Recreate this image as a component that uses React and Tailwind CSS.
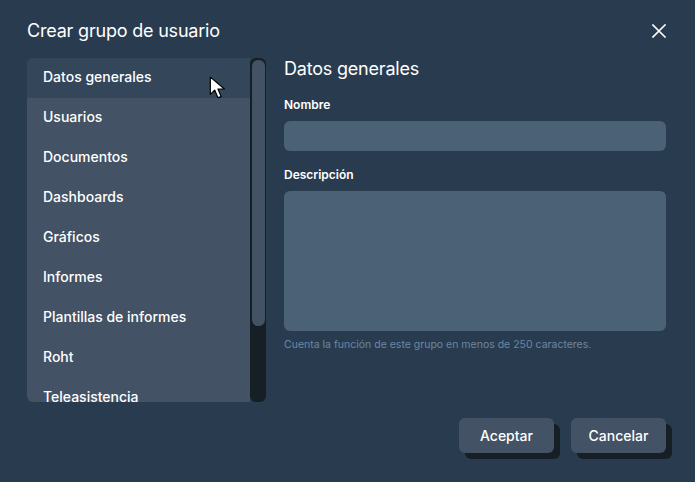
import React from "react";

const items = [
  "Datos generales",
  "Usuarios",
  "Documentos",
  "Dashboards",
  "Gráficos",
  "Informes",
  "Plantillas de informes",
  "Roht",
  "Teleasistencia",
];

const App = () => {
  return (
    <div
      className="w-[695px] h-[482px] bg-[#293c4f] text-white relative overflow-hidden"
      style={{ fontFamily: "Inter, 'Noto Sans', sans-serif" }}
    >
      {/* Header */}
      <div className="flex items-center justify-between pl-[27px] pr-[29px] pt-[19px] h-[43px]">
        <h1 className="text-[18px] leading-none font-normal tracking-[-0.2px]">Crear grupo de usuario</h1>
        <svg width="14" height="14" viewBox="0 0 14 14">
          <path d="M1 1 L13 13 M13 1 L1 13" stroke="#ffffff" strokeWidth="1.6" strokeLinecap="square" />
        </svg>
      </div>

      <div className="flex pl-[27px] pt-[15px]">
        {/* Left menu */}
        <div className="flex h-[344px]">
          <div className="w-[223px] h-full bg-[#435264] rounded-l-md overflow-hidden">
            {items.map((item, i) => (
              <div
                key={item}
                className={`h-[40px] flex items-center pl-[16px] pb-[3px] text-[14px] font-medium ${
                  i === 0 ? "bg-[#34475a]" : ""
                }`}
              >
                {item}
              </div>
            ))}
          </div>
          {/* Scrollbar */}
          <div className="w-[16px] h-full bg-[#161e26] rounded-md p-[1.5px]">
            <div className="w-full h-[266px] bg-[#435264] rounded-md"></div>
          </div>
        </div>

        {/* Right form */}
        <div className="ml-[18px] w-[382px]">
          <h2 className="text-[18px] leading-none mt-[2px] tracking-[-0.2px]">Datos generales</h2>
          <div className="text-[12px] font-semibold mt-[21px] leading-none">Nombre</div>
          <div className="h-[30px] bg-[#4b6176] rounded-md mt-[10px]"></div>
          <div className="text-[12px] font-semibold mt-[18px] leading-none">Descripción</div>
          <div className="h-[140px] bg-[#4b6176] rounded-md mt-[10px]"></div>
          <div className="text-[10.5px] text-[#6b87a2] mt-[9px] leading-none">
            Cuenta la función de este grupo en menos de 250 caracteres.
          </div>
        </div>
      </div>

      {/* Footer buttons */}
      <div className="flex justify-end gap-[17px] pr-[29px] mt-[16px]">
        <button className="w-[95px] h-[35px] bg-[#435264] rounded-md text-[14px] font-medium shadow-[6px_6px_0_#161e26]">
          Aceptar
        </button>
        <button className="w-[95px] h-[35px] bg-[#435264] rounded-md text-[14px] font-medium shadow-[6px_6px_0_#161e26]">
          Cancelar
        </button>
      </div>

      {/* Mouse cursor */}
      <svg
        width="20"
        height="26"
        viewBox="0 0 18 24"
        className="absolute left-[209px] top-[76px]"
      >
        <path
          d="M1 1 L1 17 L5 13 L8 20 L11 19 L8 12 L14 12 Z"
          fill="#ffffff"
          stroke="#000000"
          strokeWidth="1.1"
          strokeLinejoin="round"
        />
      </svg>
    </div>
  );
};

export default App;
